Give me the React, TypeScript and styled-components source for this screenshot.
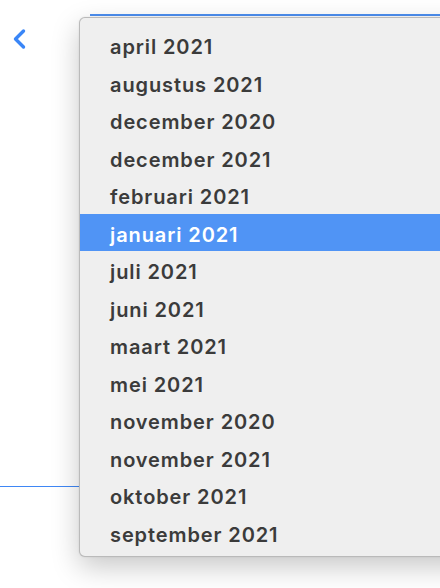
import React from "react";
import styled, { createGlobalStyle } from "styled-components";

const Global = createGlobalStyle`
  html, body { margin: 0; padding: 0; background: #ffffff; }
  body { width: 440px; height: 588px; overflow: hidden; font-family: Inter, "Liberation Sans", sans-serif; }
`;

const Page = styled.div`
  position: relative;
  width: 440px;
  height: 588px;
  display: flex;
  flex-direction: column;
  overflow: hidden;
`;

const Header = styled.div`
  display: flex;
  align-items: flex-start;
  height: 60px;
`;

const BackButton = styled.button`
  border: 0;
  background: none;
  padding: 0;
  margin: 28px 0 0 11px;
  width: 16px;
  height: 22px;
  display: flex;
  color: #3a86f7;
`;

const Field = styled.div`
  flex: 1;
  margin: 14px 0 0 63px;
  border-top: 2px solid #4d8ff0;
`;

const Spacer = styled.div`
  flex: 0 0 426px;
`;

const Divider = styled.div`
  height: 1px;
  background: #3f87f5;
`;

const Menu = styled.ul`
  position: absolute;
  left: 79px;
  top: 17px;
  width: 400px;
  height: 540px;
  box-sizing: border-box;
  margin: 0;
  padding: 8px 0 6px;
  list-style: none;
  background: #efefef;
  border: 1px solid rgba(0, 0, 0, 0.22);
  border-radius: 6px;
  box-shadow: 0 10px 28px rgba(0, 0, 0, 0.22), 0 0 2px rgba(0, 0, 0, 0.1);
`;

const Item = styled.li<{ $active?: boolean }>`
  height: 37.5px;
  box-sizing: border-box;
  padding: 5px 0 0 30px;
  display: flex;
  align-items: center;
  font-family: Inter, "Liberation Sans", sans-serif;
  font-weight: 600;
  font-size: 20px;
  letter-spacing: 0.9px;
  color: ${(p) => (p.$active ? "#ffffff" : "#3b3b3b")};
  background: ${(p) => (p.$active ? "#5094f5" : "transparent")};
`;

const months = [
  "april 2021",
  "augustus 2021",
  "december 2020",
  "december 2021",
  "februari 2021",
  "januari 2021",
  "juli 2021",
  "juni 2021",
  "maart 2021",
  "mei 2021",
  "november 2020",
  "november 2021",
  "oktober 2021",
  "september 2021",
];

export default function App() {
  return (
    <>
      <Global />
      <Page>
        <Header>
          <BackButton aria-label="Terug">
            <svg width="16" height="22" viewBox="0 0 16 22" fill="none">
              <path d="M12.5 3 L4.5 11 L12.5 19" stroke="currentColor" strokeWidth="3.4" strokeLinecap="round" strokeLinejoin="round" />
            </svg>
          </BackButton>
          <Field />
        </Header>
        <Spacer />
        <Divider />
        <Menu>
          {months.map((m) => (
            <Item key={m} $active={m === "januari 2021"}>
              {m}
            </Item>
          ))}
        </Menu>
      </Page>
    </>
  );
}
